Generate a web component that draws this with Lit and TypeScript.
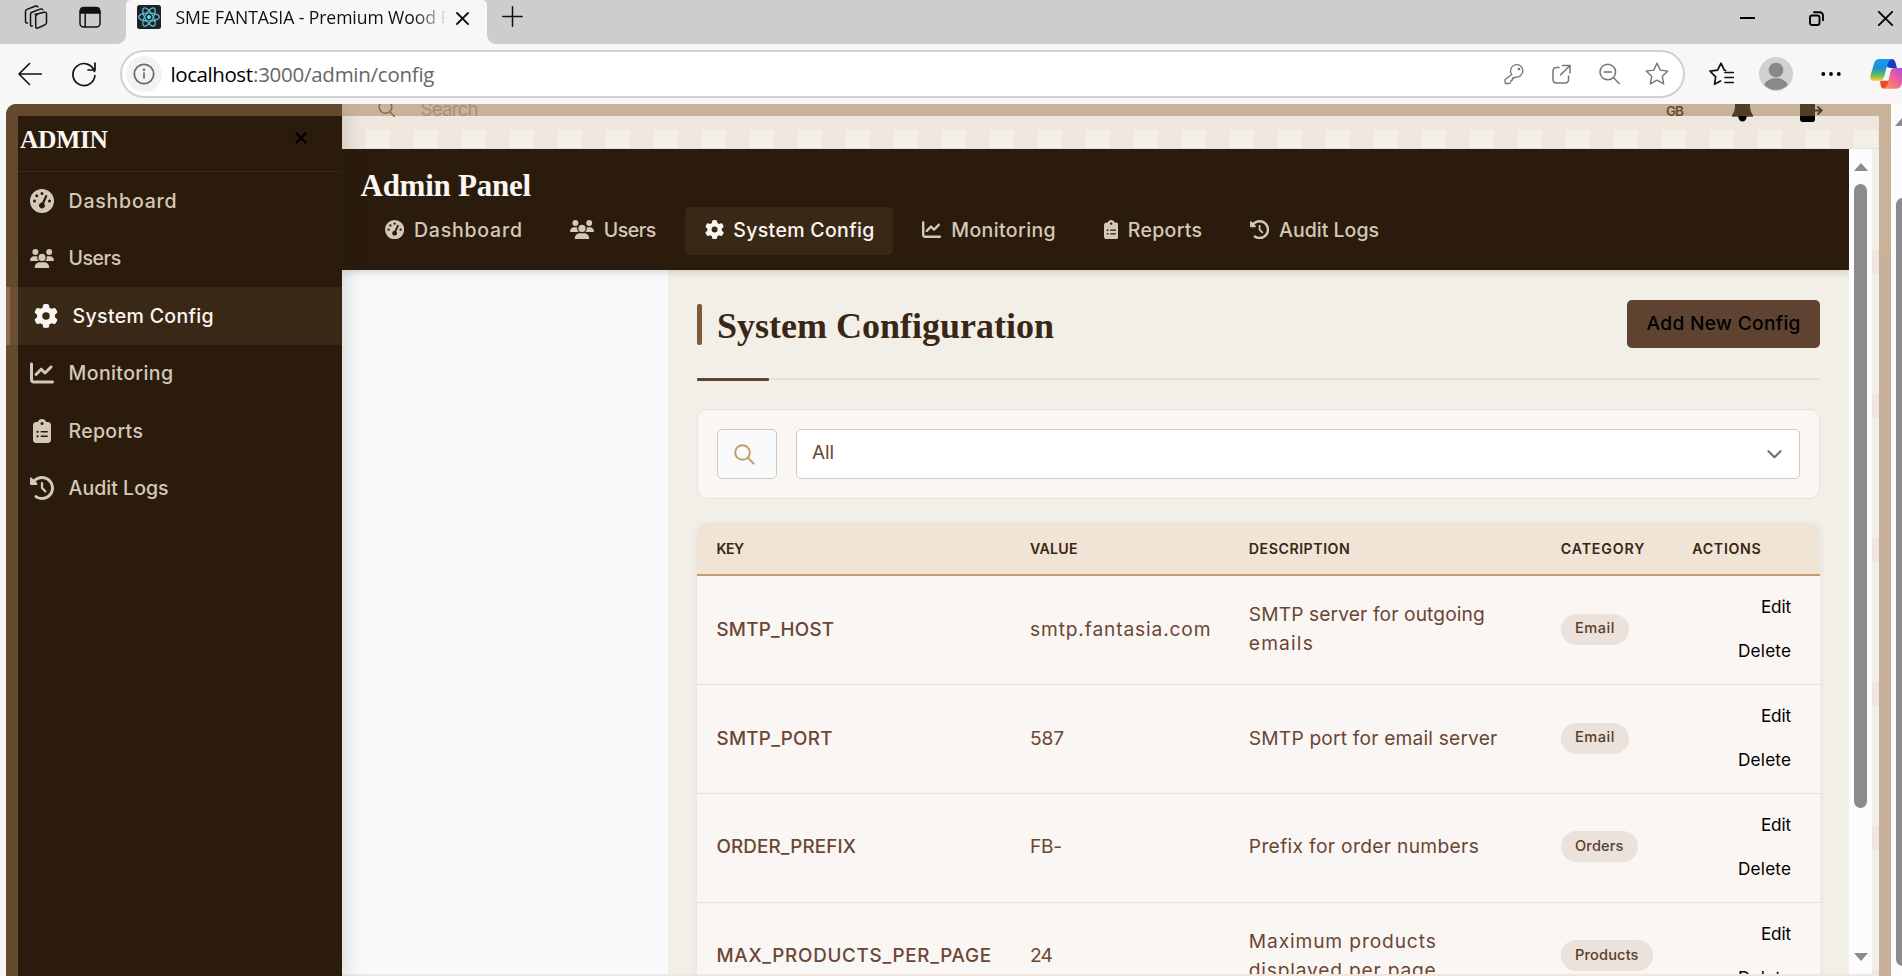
import { LitElement, html, css, svg, nothing } from "lit";
import { customElement, property, query } from "lit/decorators.js";
import { classMap } from "lit/directives/class-map.js";

/* Font Awesome style solid glyphs: [viewBox width, path] */
const GLYPHS: Record<string, [number, string]> = {
  dashboard: [512, "M0 256a256 256 0 1 1 512 0A256 256 0 1 1 0 256zM288 96a32 32 0 1 0 -64 0 32 32 0 1 0 64 0zM256 416c35.3 0 64-28.7 64-64c0-17.4-6.9-33.1-18.1-44.6L366 161.7c5.3-12.1-.2-26.3-12.3-31.6s-26.3 .2-31.6 12.3L257.9 288c-.6 0-1.3 0-1.9 0c-35.3 0-64 28.7-64 64s28.7 64 64 64zM176 144a32 32 0 1 0 -64 0 32 32 0 1 0 64 0zM96 288a32 32 0 1 0 0-64 32 32 0 1 0 0 64zm352-32a32 32 0 1 0 -64 0 32 32 0 1 0 64 0z"],
  users: [640, "M144 0a80 80 0 1 1 0 160A80 80 0 1 1 144 0zM512 0a80 80 0 1 1 0 160A80 80 0 1 1 512 0zM0 298.7C0 239.8 47.8 192 106.7 192h42.7c15.9 0 31 3.5 44.6 9.7c-1.3 7.2-1.9 14.7-1.9 22.3c0 38.2 16.8 72.5 43.3 96c-.2 0-.4 0-.7 0H21.3C9.6 320 0 310.4 0 298.7zM405.3 320c-.2 0-.4 0-.7 0c26.6-23.5 43.3-57.8 43.3-96c0-7.6-.7-15-1.9-22.3c13.6-6.3 28.7-9.7 44.6-9.7h42.7C592.2 192 640 239.8 640 298.7c0 11.8-9.6 21.3-21.3 21.3H405.3zM224 224a96 96 0 1 1 192 0 96 96 0 1 1 -192 0zM128 485.3C128 411.7 187.7 352 261.3 352H378.7C452.3 352 512 411.7 512 485.3c0 14.7-11.9 26.7-26.7 26.7H154.7c-14.7 0-26.7-11.9-26.7-26.7z"],
  gear: [512, "M495.9 166.6c3.2 8.7 .5 18.4-6.4 24.6l-43.3 39.4c1.1 8.3 1.7 16.8 1.7 25.4s-.6 17.1-1.7 25.4l43.3 39.4c6.9 6.2 9.6 15.9 6.4 24.6c-4.4 11.9-9.7 23.3-15.8 34.3l-4.7 8.1c-6.6 11-14 21.4-22.1 31.2c-5.9 7.2-15.7 9.6-24.5 6.8l-55.7-17.7c-13.4 10.3-28.2 18.9-44 25.4l-12.5 57.1c-2 9.1-9 16.3-18.2 17.8c-13.8 2.3-28 3.5-42.5 3.5s-28.7-1.2-42.5-3.5c-9.2-1.5-16.2-8.7-18.2-17.8l-12.5-57.1c-15.8-6.5-30.6-15.1-44-25.4L83.1 425.9c-8.8 2.8-18.6 .3-24.5-6.8c-8.1-9.8-15.5-20.2-22.1-31.2l-4.7-8.1c-6.1-11-11.4-22.4-15.8-34.3c-3.2-8.7-.5-18.4 6.4-24.6l43.3-39.4C64.6 273.1 64 264.6 64 256s.6-17.1 1.7-25.4L22.4 191.2c-6.9-6.2-9.6-15.9-6.4-24.6c4.4-11.9 9.7-23.3 15.8-34.3l4.7-8.1c6.6-11 14-21.4 22.1-31.2c5.9-7.2 15.7-9.6 24.5-6.8l55.7 17.7c13.4-10.3 28.2-18.9 44-25.4l12.5-57.1c2-9.1 9-16.3 18.2-17.8C227.3 1.2 241.5 0 256 0s28.7 1.2 42.5 3.5c9.2 1.5 16.2 8.7 18.2 17.8l12.5 57.1c15.8 6.5 30.6 15.1 44 25.4l55.7-17.7c8.8-2.8 18.6-.3 24.5 6.8c8.1 9.8 15.5 20.2 22.1 31.2l4.7 8.1c6.1 11 11.4 22.4 15.8 34.3zM256 336a80 80 0 1 0 0-160 80 80 0 1 0 0 160z"],
  chart: [512, "M64 64c0-17.7-14.3-32-32-32S0 46.3 0 64V400c0 44.2 35.8 80 80 80H480c17.7 0 32-14.3 32-32s-14.3-32-32-32H80c-8.8 0-16-7.2-16-16V64zm406.6 86.6c12.5-12.5 12.5-32.8 0-45.3s-32.8-12.5-45.3 0L320 210.7l-57.4-57.4c-12.5-12.5-32.8-12.5-45.3 0l-112 112c-12.5 12.5-12.5 32.8 0 45.3s32.8 12.5 45.3 0L240 221.3l57.4 57.4c12.5 12.5 32.8 12.5 45.3 0l128-128z"],
  clipboard: [384, "M192 0c-41.8 0-77.4 26.7-90.5 64H64C28.7 64 0 92.7 0 128V448c0 35.3 28.7 64 64 64H320c35.3 0 64-28.7 64-64V128c0-35.3-28.7-64-64-64H282.5C269.4 26.7 233.8 0 192 0zm0 64a32 32 0 1 1 0 64 32 32 0 1 1 0-64zM72 272a24 24 0 1 1 48 0 24 24 0 1 1 -48 0zm104-16H304c8.8 0 16 7.2 16 16s-7.2 16-16 16H176c-8.8 0-16-7.2-16-16s7.2-16 16-16zM72 368a24 24 0 1 1 48 0 24 24 0 1 1 -48 0zm88 0c0-8.8 7.2-16 16-16H304c8.8 0 16 7.2 16 16s-7.2 16-16 16H176c-8.8 0-16-7.2-16-16z"],
  history: [512, "M75 75L41 41C25.9 25.9 0 36.6 0 57.9V168c0 13.3 10.7 24 24 24H134.1c21.4 0 32.1-25.9 17-41l-30.8-30.8C155 85.5 203 64 256 64c106 0 192 86 192 192s-86 192-192 192c-40.8 0-78.6-12.7-109.7-34.4c-14.5-10.1-34.4-6.6-44.6 7.9s-6.6 34.4 7.9 44.6C151.2 495 201.7 512 256 512c141.4 0 256-114.6 256-256S397.4 0 256 0C185.3 0 121.3 28.7 75 75zm181 53c-13.3 0-24 10.7-24 24V256c0 6.4 2.5 12.5 7 17l72 72c9.4 9.4 24.6 9.4 33.9 0s9.4-24.6 0-33.9l-65-65V152c0-13.3-10.7-24-24-24z"],
};

interface NavEntry { icon: string; label: string; width: number; active?: boolean }
const NAV: NavEntry[] = [
  { icon: "dashboard", label: "Dashboard", width: 108 },
  { icon: "users", label: "Users", width: 52.6 },
  { icon: "gear", label: "System Config", width: 141, active: true },
  { icon: "chart", label: "Monitoring", width: 104.4 },
  { icon: "clipboard", label: "Reports", width: 74.3 },
  { icon: "history", label: "Audit Logs", width: 100 },
];

type Piece = [string, number];
interface ConfigRow { key: Piece; value: Piece; description: Piece[]; category: Piece }
const ROWS: ConfigRow[] = [
  { key: ["SMTP_HOST", 117.5], value: ["smtp.fantasia.com", 180.5], description: [["SMTP server for outgoing", 236], ["emails", 64]], category: ["Email", 39.5] },
  { key: ["SMTP_PORT", 116], value: ["587", 34], description: [["SMTP port for email server", 248.5]], category: ["Email", 39.5] },
  { key: ["ORDER_PREFIX", 139.5], value: ["FB-", 32], description: [["Prefix for order numbers", 230]], category: ["Orders", 48.5] },
  { key: ["MAX_PRODUCTS_PER_PAGE", 274.5], value: ["24", 23], description: [["Maximum products", 187], ["displayed per page", 187]], category: ["Products", 63.5] },
];

/* A single line of text tracked so that it fills the given width. */
@customElement("fit-text")
export class FitText extends LitElement {
  @property() text = "";
  @property({ type: Number }) w = 0;
  @query("span") private line!: HTMLSpanElement;
  static styles = css`
    :host { display: inline-block; white-space: pre; flex: none; }
    span { display: inline-block; }
  `;
  firstUpdated() {
    const natural = this.line.getBoundingClientRect().width;
    const gaps = Math.max(1, [...this.text].length - 1);
    this.line.style.letterSpacing = `${(this.w - natural) / gaps}px`;
    this.style.width = `${this.w}px`;
  }
  render() { return html`<span>${this.text}</span>`; }
}

const fit = (text: string, w: number) => html`<fit-text .text=${text} .w=${w}></fit-text>`;

const glyph = (name: string, size: number) => {
  const [vw, d] = GLYPHS[name];
  return html`<svg width=${(size * vw) / 512} height=${size} viewBox="0 0 ${vw} 512" fill="currentColor"><path d=${d}></path></svg>`;
};

const line = (w: number, h: number, body: unknown, stroke = 1.5) => html`<svg width=${w} height=${h}
  viewBox="0 0 ${w} ${h}" fill="none" stroke="currentColor" stroke-width=${stroke} stroke-linecap="round" stroke-linejoin="round">${body}</svg>`;

@customElement("browser-chrome")
export class BrowserChrome extends LitElement {
  static styles = css`
    :host { display: block; height: 104px; flex: none; font-family: "Open Sans", "Noto Sans", sans-serif; color: #111; }
    svg { display: block; flex: none; }
    .strip { display: flex; height: 44px; background: #cdcdcd; }
    .left { display: flex; gap: 31px; padding: 5px 25px 0 24px; }
    .tab { position: relative; box-sizing: border-box; width: 361px; padding: 0 18px 10px 11px; display: flex; align-items: center;
      background: #f7f7f7; border-radius: 5px 5px 0 0; }
    .tab::before, .tab::after { content: ""; position: absolute; bottom: 0; width: 9px; height: 9px; }
    .tab::before { left: -9px; background: radial-gradient(circle at 0 0, #cdcdcd 8.5px, #f7f7f7 9.2px); }
    .tab::after { right: -9px; background: radial-gradient(circle at 100% 0, #cdcdcd 8.5px, #f7f7f7 9.2px); }
    .title { width: 276px; height: 26px; overflow: hidden; margin-left: 14.5px; font-size: 17.6px; line-height: 26px;
      -webkit-mask-image: linear-gradient(90deg, #000 238px, transparent 272px); mask-image: linear-gradient(90deg, #000 238px, transparent 272px); }
    .tab-close { margin: 2px 0 0 auto; }
    .plus { margin: 6px 0 0 15px; }
    .window { display: flex; gap: 54px; margin-left: auto; padding: 11px 9px 0 0; color: #000; }
    .bar { display: flex; align-items: center; height: 60px; padding-left: 18px; background: #f7f7f7; overflow: hidden; }
    .refresh { margin-left: 30px; }
    .url { box-sizing: border-box; display: flex; align-items: center; width: 1565px; height: 48px; margin: 0 23.5px 0 24px; padding: 0 14px 0 4px;
      flex: none; background: #fff; border: 2px solid #d1d1d1; border-radius: 24px; }
    .info { display: grid; place-items: center; width: 36px; height: 36px; border-radius: 50%; background: #f3f3f3; color: #6b6b6b; }
    .address { display: flex; margin-left: 8.5px; font-size: 20.5px; line-height: 30px; color: #666; }
    .host { color: #000; }
    .tools { display: flex; align-items: center; gap: 28px; margin-left: auto; color: #757575; }
    .tools svg:last-child { margin-left: -3px; }
    .avatar { margin-left: 25px; }
    .dots { margin-left: 28px; }
    .copilot { margin-left: 29px; }
  `;
  render() {
    return html`
      <div class="strip">
        <div class="left">
          ${line(24, 24, svg`<path d="M11 9.5l9-2.2q2.5-.6 2.5 1.8v8.5q0 1.3-1.2 2l-6.8 3.2q-2.8 1.2-2.8-1.5V12q0-1.8 1.6-2.4z"/>
            <path d="M6.5 20V9.5q0-1.6 1.4-2.2l8.3-3.2q1.8-.6 2.6.6M8.3 21q-1.8.6-1.8-1.2"/><path d="M1.5 17V6.5q0-1.5 1.5-2.1l8-3.1q2-.6 2.8.6M3.5 18q-2 0-2-1.6"/>`)}
          ${line(22, 24, svg`<rect x="1" y="3" width="20" height="19" rx="3.5"/><path d="M1.5 8V6q0-3.5 3.500-3.500h12q3.500 0 3.500 3.500v2z" fill="currentColor"/><path d="M6.200 9v12.500"/>`)}
        </div>
        <div class="tab">
          <svg width="24" height="24" viewBox="0 0 24 24"><rect width="24" height="24" rx="2.500" fill="#222"></rect>
            <g fill="none" stroke="#58c4dc" stroke-width="1.200"><ellipse cx="12" cy="12" rx="10.300" ry="4"></ellipse>
            <ellipse cx="12" cy="12" rx="10.300" ry="4" transform="rotate(60 12 12)"></ellipse><ellipse cx="12" cy="12" rx="10.300" ry="4" transform="rotate(120 12 12)"></ellipse></g>
            <circle cx="12" cy="12" r="2" fill="#61dafb"></circle></svg>
          <div class="title">${fit("SME FANTASIA - Premium Wood F", 274)}</div>
          <div class="tab-close">${line(13, 13, svg`<path d="M1 1l11 11M12 1L1 12"/>`, 1.8)}</div>
        </div>
        <div class="plus">${line(21, 21, svg`<path d="M10.500 .8v19.400M.8 10.500h19.400"/>`)}</div>
        <div class="window">
          ${line(15, 15, svg`<path d="M.5 7h14"/>`, 2)}
          ${line(15, 15, svg`<rect x="1" y="4.500" width="9.500" height="9.500" rx="2"/><path d="M5 1.200h5.500q3.500 0 3.500 3.500v4.600"/>`, 1.9)}
          ${line(15, 15, svg`<path d="M.8 .8l13.400 13.400M14.200 .8L.8 14.200"/>`, 1.8)}
        </div>
      </div>
      <div class="bar">
        ${line(24, 24, svg`<path d="M23.300 12H1M11.500 1.500L1 12l10.500 10.500"/>`, 1.6)}
        <div class="refresh">${line(24, 26, svg`<path d="M22.500 10.500a11 11 0 1 0 .4 4M23 2v7h-7"/>`, 1.7)}</div>
        <div class="url">
          <div class="info">${line(22, 22, svg`<circle cx="11" cy="11" r="9.700"/><path d="M11 10v5"/><circle cx="11" cy="6.800" r=".5"/>`, 1.7)}</div>
          <div class="address"><span class="host">${fit("localhost", 82.5)}</span>${fit(":3000/admin/config", 181.5)}</div>
          <div class="tools">
            ${line(20, 22, svg`<path d="M7.700 11.500A6.200 6.200 0 1 1 11.500 13.900L10.500 15H8.500v2l-1.500.3-.3 1.700q-.2 1.500-1.700 1.500H2Q1 20.500 1 19.500v-2q0-.7.5-1.200z"/><circle cx="15" cy="6" r=".7"/>`, 1.3)}
            ${line(19, 20, svg`<path d="M7 3.500H4.500Q1 3.500 1 7v8.500Q1 19 4.500 19H13q3.500 0 3.500-3.500V12M10.500 1.500H18V9M18 1.500L8.500 11"/>`, 1.5)}
            ${line(21, 22, svg`<circle cx="8.800" cy="9" r="7.800"/><path d="M5.300 9h7M14.500 14.800l5.700 5.700"/>`, 1.5)}
            ${line(24, 24, svg`<path d="M12 1.200l3.300 6.900 7.500 1-5.500 5.200 1.400 7.600L12 18.200l-6.700 3.700 1.400-7.600L1.200 9.100l7.500-1z"/>`, 1.4)}
          </div>
        </div>
        ${line(25, 24, svg`<path d="M11.500 19l-6 3.300 1.200-7.500L1 9.200l7.600-1L12 1.200l3.300 7 1.200.2M16 10.500h8.300M16 15.500h8.300M16 20.500h8.300"/>`, 1.7)}
        <svg class="avatar" width="34" height="34" viewBox="0 0 34 34"><defs><clipPath id="av"><circle cx="17" cy="17" r="16"></circle></clipPath></defs>
          <circle cx="17" cy="17" r="17" fill="#d2d0ce"></circle><circle cx="17" cy="13" r="7.300" fill="#8a8886"></circle>
          <ellipse cx="17" cy="31" rx="12.500" ry="10" fill="#8a8886" clip-path="url(#av)"></ellipse></svg>
        <svg class="dots" width="20" height="6" viewBox="0 0 20 6"><circle cx="2.300" cy="3" r="1.900"></circle><circle cx="10" cy="3" r="1.900"></circle><circle cx="17.800" cy="3" r="1.900"></circle></svg>
        <svg class="copilot" width="36" height="32" viewBox="0 0 108 96">
          <defs>
            <linearGradient id="c1" x1="0" y1="0" x2="0" y2="1"><stop offset="0" stop-color="#1a9bf0"></stop><stop offset=".4" stop-color="#1e8fd8"></stop><stop offset=".7" stop-color="#4fb870"></stop><stop offset="1" stop-color="#f2cf1a"></stop></linearGradient>
            <linearGradient id="c2" x1="1" y1="0" x2="0" y2="1"><stop offset="0" stop-color="#a04be8"></stop><stop offset=".5" stop-color="#f0609a"></stop><stop offset="1" stop-color="#ff9a4a"></stop></linearGradient>
          </defs>
          <path d="M50 3h14q9 0 12 9l5 18H62q-10 0-13-9z" fill="#1440c0"></path>
          <path d="M30 68h30l-8 18q-3 6-10 6-7 0-10-9z" fill="#f04a2a"></path>
          <path d="M27 3h38q-9 3-12 14L43 54q-4 14-16 14H13Q-3 68 2 50L12 17Q16 3 27 3z" fill="url(#c1)"></path>
          <path d="M72 30h22q16 0 11 18L95 79q-4 13-16 13H41q9-3 12-14l8-36q3-12 11-12z" fill="url(#c2)"></path>
        </svg>
      </div>`;
  }
}

@customElement("admin-sidebar")
export class AdminSidebar extends LitElement {
  static styles = css`
    :host { display: block; width: 336px; background: #2a1b0c; box-shadow: 4px 0 18px rgba(40, 30, 20, 0.16); position: relative; z-index: 2; }
    svg { display: block; flex: none; }
    .head { box-sizing: border-box; display: flex; justify-content: space-between; height: 68px; padding: 18px 35px 0 14px; border-bottom: 1px solid #3a2614; }
    .brand { font: bold 25.500px/35px "Liberation Serif", serif; color: #faf6f2; }
    .close { margin-top: 9.500px; color: #000; }
    .item { box-sizing: border-box; display: flex; align-items: center; gap: 14.6px; height: 57.5px; padding-left: 24px;
      font: 500 19.500px/30px Inter, sans-serif; color: #d4c8b8; }
    .item.active { border-left: 4px solid #8b5e3c; background: #3a2816; color: #faf6f2; }
    .icon { display: grid; place-items: center; width: 24px; }
  `;
  render() {
    return html`
      <div class="head"><span class="brand">${fit("ADMIN", 88)}</span>
        <span class="close">${line(12, 12, svg`<path d="M1.500 1.500l9 9M10.500 1.500l-9 9"/>`, 2.2)}</span></div>
      ${NAV.map((n) => html`<div class=${classMap({ item: true, active: !!n.active })}>
        <span class="icon">${glyph(n.icon, n.icon === "users" ? 19.2 : 24)}</span>${fit(n.label, n.width)}</div>`)}`;
  }
}

@customElement("scroll-track")
export class ScrollTrack extends LitElement {
  @property({ type: Boolean }) outer = false;
  static styles = css`
    :host { display: flex; flex-direction: column; align-items: center; flex: none; width: 23px; background: #fcfcfc; overflow: hidden; }
    .up, .down { border: solid transparent; border-width: 0 7.500px 8px; border-bottom-color: #8b8b8b; }
    .up { margin: 14px 0 13px; }
    .thumb { width: 13px; height: 624px; border-radius: 7px; background: #8b8b8b; }
    .down { border-width: 8px 7.500px 0; border-top-color: #8b8b8b; margin-top: auto; margin-bottom: 13px; }
    :host([outer]) { width: 11px; align-items: flex-start; }
    :host([outer]) .up { margin: 14px 0 72px 4px; }
    :host([outer]) .thumb { margin-left: 5px; height: 768px; }
  `;
  render() {
    return html`<div class="up"></div><div class="thumb"></div>${this.outer ? nothing : html`<div class="down"></div>`}`;
  }
}

@customElement("config-table")
export class ConfigTable extends LitElement {
  static styles = css`
    :host { display: block; border-radius: 10px; overflow: hidden; background: #faf6f3; box-shadow: 0 2px 10px rgba(60, 40, 20, 0.06); font-family: Inter, sans-serif; }
    .head, .row { display: grid; grid-template-columns: 313.500px 218.800px 312px 131.500px 1fr; padding-left: 19.500px; align-items: center; }
    .head { height: 51px; background: #efe4d6; border-bottom: 2px solid #c69c6d; font-size: 14.200px; font-weight: 600; color: #3a2614; line-height: 20px; }
    .row { box-sizing: border-box; height: 108.900px; border-bottom: 1px solid #e8e2d6; font-size: 19.200px; line-height: 29px; color: #6b4634; }
    .cell { padding-bottom: 1.500px; display: flex; flex-direction: column; align-items: flex-start; }
    .key { font-size: 18.800px; font-weight: 500; }
    .badge { display: flex; align-items: center; box-sizing: border-box; height: 31px; padding: 0 14.200px 1px; border-radius: 16px; background: #ebe2dc;
      font-size: 14.600px; font-weight: 500; color: #5a3d28; }
    .actions { display: flex; flex-direction: column; align-items: flex-end; gap: 14px; padding: 0 29px 1px 0; font-size: 17.200px; line-height: 30px; color: #000; }
  `;
  render() {
    return html`
      <div class="head">${fit("KEY", 27.5)}${fit("VALUE", 47.5)}${fit("DESCRIPTION", 101)}${fit("CATEGORY", 83.5)}${fit("ACTIONS", 68.5)}</div>
      ${ROWS.map((r) => html`<div class="row">
        <div class="cell key">${fit(...r.key)}</div>
        <div class="cell">${fit(...r.value)}</div>
        <div class="cell">${r.description.map((d) => fit(...d))}</div>
        <div class="cell"><span class="badge">${fit(...r.category)}</span></div>
        <div class="actions">${fit("Edit", 30)}${fit("Delete", 53)}</div>
      </div>`)}`;
  }
}

@customElement("admin-panel")
export class AdminPanel extends LitElement {
  static styles = css`
    :host { display: flex; flex-direction: column; flex: 1; min-width: 0; overflow: hidden; background: #f9fafc; font-family: Inter, sans-serif; }
    svg { display: block; flex: none; }
    .top { box-sizing: border-box; height: 121px; flex: none; padding: 16px 0 0 18.500px; background: #2a1b0c; box-shadow: 0 2px 7px rgba(40, 30, 20, 0.18); position: relative; z-index: 1; }
    .brand { height: 42px; font: bold 31px/41px "Liberation Serif", serif; color: #faf6f2; }
    .nav { display: flex; gap: 9.800px; padding-left: 5.500px; }
    .item { display: flex; align-items: center; gap: 9.600px; box-sizing: border-box; height: 48px; padding: 0 19.200px 3px; border-radius: 5px;
      font-size: 19.500px; font-weight: 500; line-height: 30px; color: #d4c8b8; }
    .item.active { background: #3a2816; color: #faf6f2; }
    .content { flex: 1; margin-left: 326px; padding: 30px 29px 0; background: #f2efe8; overflow: hidden; }
    .heading { box-sizing: border-box; display: flex; justify-content: space-between; align-items: flex-start; height: 80px; border-bottom: 2px solid #e8e2d6; position: relative; }
    .heading::after { content: ""; position: absolute; left: 0; bottom: -3px; width: 72px; height: 3px; background: #5e4330; border-radius: 1px; }
    .title { display: flex; gap: 15px; padding-top: 4px; font: bold 36px/45px "Liberation Serif", serif; color: #3a2614; }
    .title::before { content: ""; width: 5px; height: 41px; border-radius: 2px; background: #7d5a3c; }
    .add { box-sizing: border-box; width: 193px; height: 48px; padding-bottom: 2px; display: grid; place-items: center; border-radius: 5px; background: #5e4430;
      font-size: 19.200px; font-weight: 500; color: #000; }
    .filters { box-sizing: border-box; display: flex; gap: 19px; height: 90px; margin: 29px 0 24px; padding: 19px; border: 1px solid #e8e2d6; border-radius: 10px; background: #faf6f3; }
    .search, .select { box-sizing: border-box; height: 50px; display: flex; align-items: center; border: 1px solid #d4c8b8; border-radius: 5px; }
    .search { width: 60px; padding-left: 16px; background: #f9fafc; color: #c69c6d; }
    .select { flex: 1; justify-content: space-between; padding: 0 17px 0 15px; background: #fff; font-size: 19px; line-height: 30px; color: #6b4634; }
    .select fit-text { margin-bottom: 2px; }
    .select svg { color: #6b7280; }
  `;
  render() {
    return html`
      <div class="top">
        <div class="brand">${fit("Admin Panel", 170.5)}</div>
        <div class="nav">${NAV.map((n) => html`<div class=${classMap({ item: true, active: !!n.active })}>${glyph(n.icon, 19.2)}${fit(n.label, n.width)}</div>`)}</div>
      </div>
      <div class="content">
        <div class="heading"><div class="title">${fit("System Configuration", 337)}</div><div class="add">${fit("Add New Config", 154)}</div></div>
        <div class="filters">
          <div class="search">${line(21, 21, svg`<circle cx="8.500" cy="8.500" r="7.300"/><path d="M13.800 13.800l5.700 5.700"/>`, 2)}</div>
          <div class="select">${fit("All", 22)}${line(15, 9, svg`<path d="M1.500 1.200l6 6 6-6"/>`, 2.2)}</div>
        </div>
        <config-table></config-table>
      </div>`;
  }
}

@customElement("app-root")
export class AppRoot extends LitElement {
  static styles = css`
    :host { display: flex; flex-direction: column; width: 1902px; height: 976px; overflow: hidden; background: #f7f7f7; }
    svg { display: block; flex: none; }
    .view { display: flex; height: 872px; padding-left: 6px; }
    .frame { position: relative; display: flex; flex: 1; min-width: 0; overflow: hidden; border-radius: 10px 0 0 0; background: #efe7dd; }
    .border { position: absolute; inset: 0; z-index: 5; border: 12px solid rgba(161, 123, 85, 0.49); border-bottom: 0; border-top-left-radius: 10px; pointer-events: none; }
    .body { display: flex; flex-direction: column; flex: 1; min-width: 0; }
    .header { position: relative; display: flex; align-items: flex-start; box-sizing: border-box; height: 45px; flex: none; padding-left: 35.500px; border-bottom: 1px solid #e0e3ea;
      background: repeating-linear-gradient(90deg, transparent 0 24px, #f5f0e7 24px 48px) 0 26px no-repeat; font-family: Inter, sans-serif; }
    .lens { margin-top: -4px; color: #7d5a3c; }
    .hint { margin: -12px 0 0 26px; font-size: 18.800px; line-height: 35px; color: #aaa5a6; }
    .locale { margin: -8px 0 0 auto; font-size: 13.500px; font-weight: 600; line-height: 31px; color: #2a1b0c; }
    .bell { margin: -2px 0 0 48px; }
    .exit { margin: -2px 68px 0 47px; }
    .main { display: flex; flex: 1; min-height: 0; padding-bottom: 2px; }
    .edge { width: 19px; flex: none; background: linear-gradient(90deg, transparent 7px, rgba(239, 231, 221, .6) 7px) 0 0 / 0 0, repeating-linear-gradient(180deg, #f5f0e7 0 101px, #efe7dd 101px 125px, #f5f0e7 125px 144px);
      box-shadow: inset -12px 0 0 #efe7dd; }
  `;
  render() {
    return html`
      <browser-chrome></browser-chrome>
      <div class="view">
        <div class="frame">
          <admin-sidebar></admin-sidebar>
          <div class="body">
            <div class="header">
              <div class="lens">${line(17, 18, svg`<circle cx="7.500" cy="7" r="6.300"/><path d="M12 11.700l4.200 4.600"/>`, 1.5)}</div>
              <div class="hint">${fit("Search", 58)}</div>
              <div class="locale">${fit("GB", 18)}</div>
              <svg class="bell" width="21" height="20" viewBox="0 0 21 20"><path d="M3 0h15v5q0 4 3 8.500v1H0v-1Q3 9 3 5zM6.200 14.500h8.600q-.8 5-4.300 5t-4.300-5z"></path></svg>
              <svg class="exit" width="23" height="20" viewBox="0 0 23 20"><path d="M0 0h15v17q0 3-2.500 3h-10Q0 20 0 17z"></path>
                <path d="M14 8.500h7M17.500 4.500l4.200 4-4.200 4" fill="none" stroke="#000" stroke-width="1.800"></path></svg>
            </div>
            <div class="main">
              <admin-panel></admin-panel>
              <scroll-track></scroll-track>
              <div class="edge"></div>
            </div>
          </div>
          <div class="border"></div>
        </div>
        <scroll-track outer></scroll-track>
      </div>`;
  }
}
